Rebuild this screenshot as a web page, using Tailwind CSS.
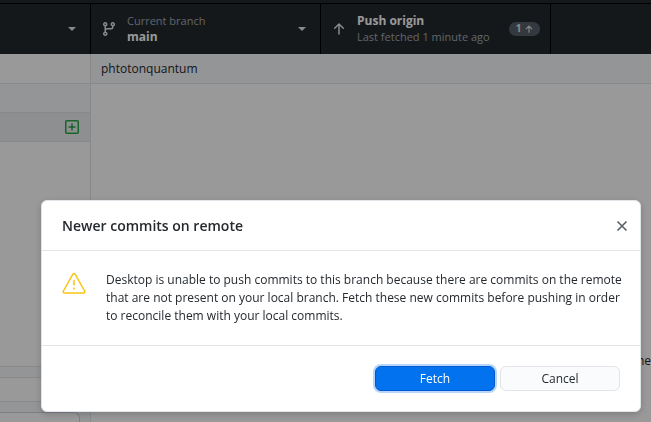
<!DOCTYPE html>
<html lang="en">
<head>
  <meta charset="UTF-8">
  <meta name="viewport" content="width=device-width, initial-scale=1">
  <title>Newer commits on remote</title>
  <script src="https://cdn.jsdelivr.net/npm/@tailwindcss/browser@4"></script>
</head>
<body class="h-screen overflow-hidden bg-white font-['Open_Sans','Noto_Sans_CJK_KR',sans-serif] text-xs text-[#24292e]">

  <div class="flex h-full flex-col">
    <!-- Toolbar -->
    <header class="shrink-0 bg-[#24292e] pt-[3px]">
      <div class="flex h-[51px] border-t border-black text-[#e1e4e8]">
        <button type="button" aria-label="Current repository" class="flex w-[91px] shrink-0 items-center justify-end border-r border-black pr-3.5">
          <svg class="h-1 w-2" viewBox="0 0 8 4" fill="currentColor"><path d="M0 0h8L4 4z"/></svg>
        </button>
        <button type="button" class="flex w-[230px] shrink-0 items-center border-r border-black pr-3.5 pl-2.5 text-left">
          <svg class="mr-2.5 size-4 shrink-0" viewBox="0 0 16 16" fill="currentColor"><path fill-rule="evenodd" d="M11.75 2.5a.75.75 0 100 1.5.75.75 0 000-1.5zm-2.25.75a2.25 2.25 0 113 2.122V6A2.5 2.5 0 0110 8.500H6a1 1 0 00-1 1v1.128a2.251 2.251 0 11-1.500 0V5.372a2.250 2.250 0 111.500 0v1.836A2.492 2.492 0 016 7h4a1 1 0 001-1v-.628A2.250 2.250 0 019.500 3.250zM4.250 12a.75.75 0 100 1.500.75.75 0 000-1.500zM3.500 3.250a.75.75 0 111.500 0 .75.75 0 01-1.500 0z"/></svg>
          <span class="min-w-0 flex-1 text-[11px] leading-4">
            <span class="block text-[#a3aab1]">Current branch</span>
            <span class="block text-xs/4 font-bold text-white">main</span>
          </span>
          <svg class="h-1 w-2" viewBox="0 0 8 4" fill="currentColor"><path d="M0 0h8L4 4z"/></svg>
        </button>
        <button type="button" class="flex w-[230px] shrink-0 items-center border-r border-black pr-2.5 pl-2.5 text-left">
          <svg class="mr-2.5 size-4 shrink-0" viewBox="0 0 16 16" fill="none" stroke="currentColor" stroke-width="1.5" stroke-linecap="round" stroke-linejoin="round"><path d="M8 13V3M3.700 7.300L8 3l4.300 4.300"/></svg>
          <span class="min-w-0 flex-1 text-[11px] leading-4 whitespace-nowrap">
            <span class="block text-xs/4 font-bold text-white">Push origin</span>
            <span class="block text-[#a3aab1]">Last fetched 1 minute ago</span>
          </span>
          <span class="flex h-3.5 w-[31px] items-center justify-center gap-1 rounded-full bg-[#586069] text-[10px] font-bold">
            1
            <svg class="size-2" viewBox="0 0 8 8" fill="none" stroke="currentColor" stroke-width="1.1" stroke-linecap="round"><path d="M4 7.300V1M1.200 3.800L4 1l2.800 2.800"/></svg>
          </span>
        </button>
      </div>
    </header>

    <div class="flex min-h-0 flex-1">
      <!-- Changes list -->
      <aside class="flex w-[91px] shrink-0 flex-col border-r border-[#e1e4e8]">
        <div class="h-[30px] border-b border-[#e1e4e8]"></div>
        <div class="h-[29px] border-b border-[#e1e4e8] bg-[#f6f8fa]"></div>
        <div class="flex h-[29px] items-center justify-end border-b border-[#e1e4e8] bg-[#ebeef1] pr-[11px]">
          <svg class="size-3.5 text-[#28a745]" viewBox="0 0 14 14" fill="none" stroke="currentColor" stroke-width="1.500"><rect x=".75" y=".75" width="12.500" height="12.500" rx="1"/><path d="M7 3.500v7M3.500 7h7"/></svg>
        </div>
        <div class="flex-1"></div>
        <div class="h-3 border-y border-[#e1e4e8] bg-[#f6f8fa]"></div>
        <div class="h-[23px]"></div>
        <div class="h-[21px] overflow-hidden border-t border-[#e1e4e8] bg-[#f6f8fa] pt-2.5 pr-2.5">
          <div class="h-8 rounded-tr-md border-t border-r border-[#d1d5da] bg-white"></div>
        </div>
      </aside>

      <!-- File diff -->
      <main class="flex min-w-0 flex-1 flex-col">
        <div class="flex h-[30px] shrink-0 items-center border-b border-[#e1e4e8] bg-[#f6f8fa] px-2.5">phtotonquantum</div>
        <div class="flex flex-1 items-end justify-end pb-[53px] leading-4">the</div>
      </main>
    </div>
  </div>

  <!-- Dialog -->
  <div class="fixed inset-0 flex items-end bg-black/40 pr-2.5 pb-2.5 pl-[41px]">
    <section role="dialog" aria-labelledby="dialog-title" class="w-full rounded-md border border-[#e1e4e8] bg-white shadow-[0_2px_7px_rgba(0,0,0,0.2)]">
      <div class="flex h-[50px] items-center justify-between border-b border-[#e1e4e8] pr-3 pl-5">
        <h1 id="dialog-title" class="text-sm font-semibold">Newer commits on remote</h1>
        <button type="button" aria-label="Close" class="text-[#586069]">
          <svg class="size-3" viewBox="0 0 12 12" fill="none" stroke="currentColor" stroke-width="1.600"><path d="M1.500 1.500l9 9M10.500 1.500l-9 9"/></svg>
        </button>
      </div>
      <div class="flex gap-5 border-b border-[#e1e4e8] py-5 pr-3 pl-5">
        <svg class="size-6 shrink-0 text-[#f9c513]" viewBox="0 0 24 24" fill="none" stroke="currentColor" stroke-width="1.500" stroke-linejoin="round"><path d="M10.900 3.200L1.400 20a1.300 1.300 0 001.100 2h19a1.300 1.300 0 001.100-2L13.100 3.200a1.300 1.300 0 00-2.200 0z"/><path d="M12 9.500v4.500" stroke-linecap="round"/><circle cx="12" cy="17.500" r="1" fill="currentColor" stroke="none"/></svg>
        <p class="leading-[18px]">Desktop is unable to push commits to this branch because there are commits on the remote that are not present on your local branch. Fetch these new commits before pushing in order to reconcile them with your local commits.</p>
      </div>
      <div class="flex justify-end gap-[5px] p-5">
        <button type="button" class="h-[25px] w-[120px] rounded-md border border-[#0059d1] bg-[#0372ef] text-white ring-2 ring-[#b8d6fb]">Fetch</button>
        <button type="button" class="h-[25px] w-[120px] rounded-md border border-[#e1e4e8] bg-[#fafbfc]">Cancel</button>
      </div>
    </section>
  </div>

</body>
</html>
